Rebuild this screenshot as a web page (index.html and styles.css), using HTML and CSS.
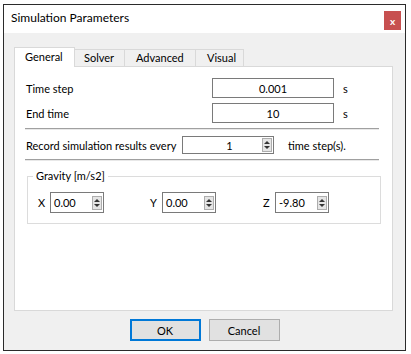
FILE: index.html
```html
<!DOCTYPE html>
<html lang="en">
<head>
    <meta charset="UTF-8">
    <title>Simulation Parameters</title>
    <link rel="stylesheet" href="styles.css">
</head>
<body>
    <div class="window">
        <div class="titlebar">
            <span class="title">Simulation Parameters</span>
            <span class="close">x</span>
        </div>
        <div class="content">
            <div class="tabs">
                <div class="tab active">General</div>
                <div class="tab">Solver</div>
                <div class="tab">Advanced</div>
                <div class="tab">Visual</div>
            </div>
            <div class="panel">
                <div class="row first">
                    <span class="label">Time step</span>
                    <div class="field wide">0.001</div>
                    <span class="unit">s</span>
                </div>
                <div class="row">
                    <span class="label">End time</span>
                    <div class="field wide">10</div>
                    <span class="unit">s</span>
                </div>
                <div class="sep"></div>
                <div class="row record">
                    <span class="label-inline">Record simulation results every</span>
                    <div class="field spin record-field">
                        <span class="value center">1</span>
                        <span class="spinner"><span class="up"></span><span class="down"></span></span>
                    </div>
                    <span class="unit-long">time step(s).</span>
                </div>
                <div class="sep"></div>
                <div class="group">
                    <span class="legend">Gravity [m/s2]</span>
                    <div class="axes">
                        <div class="axis">
                            <span class="axis-label">X</span>
                            <div class="field spin small">
                                <span class="value">0.00</span>
                                <span class="spinner"><span class="up"></span><span class="down"></span></span>
                            </div>
                        </div>
                        <div class="axis">
                            <span class="axis-label">Y</span>
                            <div class="field spin small">
                                <span class="value">0.00</span>
                                <span class="spinner"><span class="up"></span><span class="down"></span></span>
                            </div>
                        </div>
                        <div class="axis">
                            <span class="axis-label">Z</span>
                            <div class="field spin small">
                                <span class="value">-9.80</span>
                                <span class="spinner"><span class="up"></span><span class="down"></span></span>
                            </div>
                        </div>
                    </div>
                </div>
            </div>
            <div class="buttons">
                <button class="btn default">OK</button>
                <button class="btn">Cancel</button>
            </div>
        </div>
    </div>
</body>
</html>
```

FILE: styles.css
```css
html, body {
    margin: 0;
    background: #ffffff;
}
body {
    padding: 4px 0 0 3px;
    font-family: Lato, "Noto Sans", Arial, sans-serif;
    font-size: 11px;
    color: #000;
    white-space: nowrap;
}
.window {
    width: 403px;
    height: 347px;
    box-sizing: border-box;
    border: 1px solid #2b2b2b;
    background: #f0f0f0;
    display: flex;
    flex-direction: column;
}
.titlebar {
    height: 28px;
    background: #fff;
    display: flex;
    align-items: center;
    justify-content: space-between;
    padding: 0 4px 0 7px;
}
.title {
    font-size: 12px;
    margin-top: -3px;
}
.close {
    width: 17px;
    height: 19px;
    background: #c75050;
    color: #fff;
    font-size: 10px;
    font-weight: bold;
    display: flex;
    align-items: center;
    justify-content: center;
    margin-top: 3px;
}
.content {
    flex: 1;
    padding: 13px 12px 0 10px;
}
.tabs {
    display: flex;
    align-items: flex-end;
    height: 20px;
    position: relative;
    z-index: 1;
}
.tab {
    height: 17px;
    box-sizing: border-box;
    border: 1px solid #d9d9d9;
    border-bottom: none;
    border-left: none;
    padding: 0 0 0 9px;
    line-height: 16px;
    background: #f0f0f0;
}
.tab:nth-child(2) { width: 50px; }
.tab:nth-child(3) { width: 71px; padding-left: 11px; }
.tab:nth-child(4) { width: 48px; padding-left: 11px; }
.tab.active {
    height: 20px;
    width: 61px;
    border-left: 1px solid #d9d9d9;
    background: #fff;
    margin-bottom: -1px;
    line-height: 18px;
    padding: 0 0 0 10px;
}
.panel {
    height: 245px;
    box-sizing: border-box;
    border: 1px solid #d9d9d9;
    background: #fff;
    padding: 11px 12px 0 11px;
}
.row {
    display: flex;
    align-items: center;
    height: 20px;
    margin-bottom: 5px;
}
.label {
    width: 186px;
}
.field {
    box-sizing: border-box;
    border: 1px solid #7a7a7a;
    background: #fff;
    height: 20px;
    display: flex;
    align-items: center;
}
.field.wide {
    width: 122px;
    justify-content: center;
}
.unit {
    margin-left: 9px;
}
.sep {
    height: 0;
    border-top: 1px solid #a0a0a0;
    border-bottom: 1px solid #e8e8e8;
    margin: 0 1px 0 -1px;
}
.row.record {
    height: 18px;
    margin: 6px 0 5px;
}
.label-inline {
    width: 156px;
}
.field.spin {
    height: 18px;
    padding: 0 1px 0 4px;
}
.record-field {
    width: 92px;
}
.value {
    flex: 1;
}
.value.center {
    text-align: center;
    padding-left: 10px;
}
.spinner {
    width: 10px;
    height: 14px;
    box-sizing: border-box;
    border: 1px solid #adadad;
    background: #e5e5e5;
    display: flex;
    flex-direction: column;
    align-items: center;
    justify-content: space-evenly;
}
.up, .down {
    width: 0;
    height: 0;
    border-left: 3px solid transparent;
    border-right: 3px solid transparent;
}
.up {
    border-bottom: 3px solid #333;
}
.down {
    border-top: 3px solid #333;
}
.unit-long {
    margin-left: 14px;
}
.group {
    position: relative;
    margin: 15px 0 0 1px;
    padding: 15px 0 10px 10px;
    border: 1px solid #dcdcdc;
    width: 354px;
    box-sizing: border-box;
}
.legend {
    position: absolute;
    top: -9px;
    left: 5px;
    padding: 0 3px;
    background: #fff;
    line-height: 16px;
}
.axes {
    display: grid;
    grid-template-columns: 112px 113px auto;
}
.axis {
    display: flex;
    align-items: center;
}
.axis-label {
    width: 12px;
}
.field.small {
    width: 54px;
    height: 21px;
    padding-left: 3px;
}
.buttons {
    display: flex;
    justify-content: center;
    gap: 8px;
    margin-top: 8px;
    padding-left: 2px;
}
.btn {
    width: 71px;
    height: 22px;
    box-sizing: border-box;
    border: 1px solid #adadad;
    background: #e1e1e1;
    font: inherit;
    color: #000;
    padding: 0;
}
.btn.default {
    border: 1px solid #0078d7;
    box-shadow: inset 0 0 0 1px #0078d7;
}
```
